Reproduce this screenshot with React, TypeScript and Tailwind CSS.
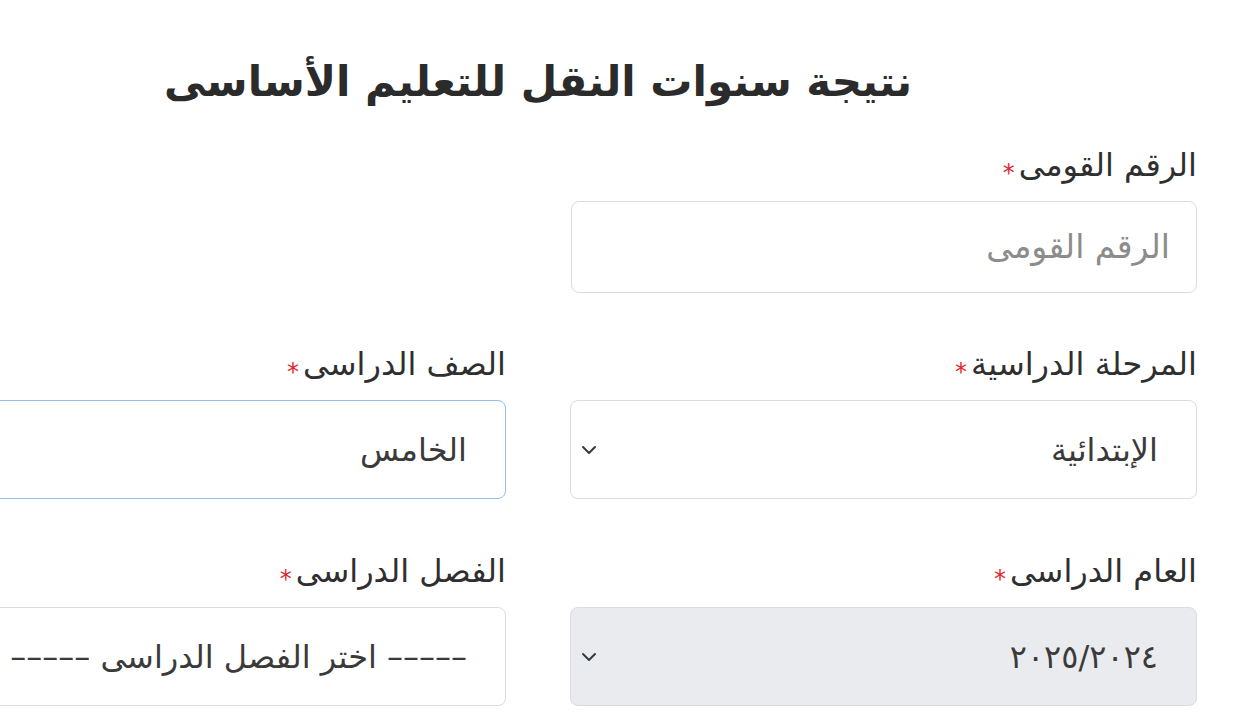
import { FC, ReactNode } from "react";

const Chevron: FC = () => (
  <svg viewBox="0 0 16 16" className="w-4 h-4 shrink-0" fill="none">
    <path
      d="m2 5 6 6 6-6"
      stroke="#343a40"
      strokeWidth="2"
      strokeLinecap="round"
      strokeLinejoin="round"
    />
  </svg>
);

const Label: FC<{ text: string }> = ({ text }) => (
  <div className="flex items-center gap-1 h-10 mb-4 text-[32px] text-[#2f2f2f]">
    <span>{text}</span>
    <span className="text-[#e3262b] text-2xl leading-none mt-4">*</span>
  </div>
);

type BoxProps = {
  children: ReactNode;
  select?: boolean;
  disabled?: boolean;
  focused?: boolean;
};

const Box: FC<BoxProps> = ({ children, select, disabled, focused }) => (
  <div
    className={`h-[99px] rounded-lg border flex items-center justify-between pr-[38px] pl-[10px] text-[32px] text-[#3a3a3a] whitespace-nowrap overflow-hidden ${
      focused ? "border-[#93bfe6]" : "border-[#dcdcdc]"
    } ${disabled ? "bg-[#e9ebee]" : "bg-white"}`}
  >
    <span>{children}</span>
    {select && <Chevron />}
  </div>
);

const Dashes: FC = () => <span className="tracking-[4px]">–––––</span>;

export default function App() {
  return (
    <div
      dir="rtl"
      className="w-[1250px] h-[720px] overflow-hidden bg-white"
      style={{ fontFamily: '"DejaVu Sans", "Noto Sans", sans-serif' }}
    >
      <div className="w-[1318px] mr-[53px]">
        <h1 className="h-[60px] mt-[52px] mb-[33px] text-center text-[42px] leading-[60px] font-bold text-[#2b2b2b]">
          نتيجة سنوات النقل للتعليم الأساسى
        </h1>

        <div className="w-[626px]">
          <Label text="الرقم القومى" />
          <div className="h-[92px] rounded-lg border border-[#dcdcdc] flex items-center pr-[26px] text-[33px] text-[#8c8c8c]">
            الرقم القومى
          </div>
        </div>

        <div className="mt-[51px] grid grid-cols-2 gap-x-[64px]">
          <div>
            <Label text="المرحلة الدراسية" />
            <Box select>الإبتدائية</Box>
          </div>
          <div>
            <Label text="الصف الدراسى" />
            <Box focused select>
              الخامس
            </Box>
          </div>
        </div>

        <div className="mt-[52px] grid grid-cols-2 gap-x-[64px]">
          <div>
            <Label text="العام الدراسى" />
            <Box select disabled>
              ٢٠٢٥/٢٠٢٤
            </Box>
          </div>
          <div>
            <Label text="الفصل الدراسى" />
            <Box select>
              <Dashes /> اختر الفصل الدراسى <Dashes />
            </Box>
          </div>
        </div>
      </div>
    </div>
  );
}
